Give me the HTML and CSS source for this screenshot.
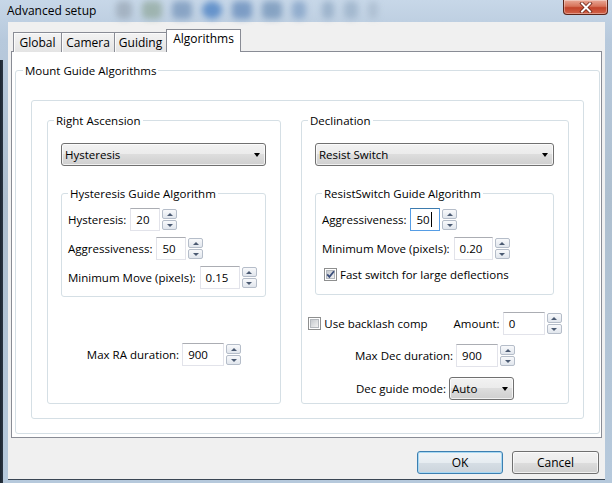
FILE: index.html
```html
<!DOCTYPE html>
<html lang="en">
<head>
  <meta charset="UTF-8" />
  <title>Advanced setup</title>
  <link rel="stylesheet" href="styles.css">
</head>
<body>
<div class="window">
  <div class="titlebar">
    <span class="title">Advanced setup</span>
    <!-- blurred desktop seen through the glass -->
    <div class="glass">
      <i class="g1"></i><i class="g2"></i><i class="g3"></i><i class="g4"></i><i class="g5"></i>
      <i class="g6"></i><i class="g7"></i><i class="g8"></i><i class="g9"></i><i class="g10"></i>
    </div>
    <div class="close">
      <svg width="14" height="11" viewBox="0 0 14 11">
        <path d="M3 1.5 L11 9.5 M11 1.5 L3 9.5" stroke="#6b2416" stroke-width="3.6" stroke-linecap="square"/>
        <path d="M3 1.5 L11 9.5 M11 1.5 L3 9.5" stroke="#fff" stroke-width="2" stroke-linecap="square"/>
      </svg>
    </div>
  </div>

  <div class="dialog">
    <div class="tabs">
      <div class="tab t-global">Global</div>
      <div class="tab t-camera">Camera</div>
      <div class="tab t-guiding">Guiding</div>
      <div class="tab t-algo active">Algorithms</div>
    </div>

    <div class="page">
      <fieldset class="mount">
        <legend>Mount Guide Algorithms</legend>
        <div class="panel">

          <fieldset class="axis ra">
            <legend>Right Ascension</legend>
            <div class="combo"><span>Hysteresis</span><i class="arrow"></i></div>
            <fieldset class="algo hyst">
              <legend>Hysteresis Guide Algorithm</legend>
              <div class="row">
                <span>Hysteresis:</span>
                <div class="spinctrl">
                  <div class="num w30">20</div>
                  <div class="spin"><b class="up"></b><b class="down"></b></div>
                </div>
              </div>
              <div class="row">
                <span>Aggressiveness:</span>
                <div class="spinctrl">
                  <div class="num w30">50</div>
                  <div class="spin"><b class="up"></b><b class="down"></b></div>
                </div>
              </div>
              <div class="row">
                <span>Minimum Move (pixels):</span>
                <div class="spinctrl">
                  <div class="num w40">0.15</div>
                  <div class="spin"><b class="up"></b><b class="down"></b></div>
                </div>
              </div>
            </fieldset>
            <div class="row centered maxra">
              <span>Max RA duration:</span>
              <div class="spinctrl">
                <div class="num w42">900</div>
                <div class="spin"><b class="up"></b><b class="down"></b></div>
              </div>
            </div>
          </fieldset>

          <fieldset class="axis dec">
            <legend>Declination</legend>
            <div class="combo"><span>Resist Switch</span><i class="arrow"></i></div>
            <fieldset class="algo resist">
              <legend>ResistSwitch Guide Algorithm</legend>
              <div class="row">
                <span>Aggressiveness:</span>
                <div class="spinctrl">
                  <div class="num w30 focused">50<i class="caret"></i></div>
                  <div class="spin"><b class="up"></b><b class="down"></b></div>
                </div>
              </div>
              <div class="row">
                <span>Minimum Move (pixels):</span>
                <div class="spinctrl">
                  <div class="num w39">0.20</div>
                  <div class="spin"><b class="up"></b><b class="down"></b></div>
                </div>
              </div>
              <div class="row checkrow">
                <span class="cb">
                  <svg width="13" height="13" viewBox="0 0 13 13">
                    <defs>
                      <linearGradient id="cbOn" x1="0" y1="0" x2="1" y2="1">
                        <stop offset="0" stop-color="#c3c7cc"/>
                        <stop offset="1" stop-color="#f4f4f4"/>
                      </linearGradient>
                    </defs>
                    <rect x="0.5" y="0.5" width="12" height="12" fill="#fff" stroke="#8e8f8f"/>
                    <rect x="2.5" y="2.5" width="8" height="8" fill="url(#cbOn)" stroke="#b4b8bd"/>
                    <path d="M3.2 6.4 L5.4 8.8 L10 3.2" fill="none" stroke="#3c4f7c" stroke-width="1.8"/>
                  </svg>
                  Fast switch for large deflections
                </span>
              </div>
            </fieldset>
            <div class="row centered backlash">
              <span class="cb">
                <svg width="13" height="13" viewBox="0 0 13 13">
                  <defs>
                    <linearGradient id="cbOff" x1="0" y1="0" x2="1" y2="1">
                      <stop offset="0" stop-color="#c3c7cc"/>
                      <stop offset="1" stop-color="#f4f4f4"/>
                    </linearGradient>
                  </defs>
                  <rect x="0.5" y="0.5" width="12" height="12" fill="#fff" stroke="#8e8f8f"/>
                  <rect x="2.5" y="2.5" width="8" height="8" fill="url(#cbOff)" stroke="#b4b8bd"/>
                </svg>
                Use backlash comp
              </span>
              <span class="amount">Amount:</span>
              <div class="spinctrl">
                <div class="num w42">0</div>
                <div class="spin"><b class="up"></b><b class="down"></b></div>
              </div>
            </div>
            <div class="row centered maxdec">
              <span>Max Dec duration:</span>
              <div class="spinctrl">
                <div class="num w42">900</div>
                <div class="spin"><b class="up"></b><b class="down"></b></div>
              </div>
            </div>
            <div class="row centered decmode">
              <span>Dec guide mode:</span>
              <div class="combo small"><span>Auto</span><i class="arrow"></i></div>
            </div>
          </fieldset>

        </div>
      </fieldset>
    </div>

    <div class="buttons">
      <div class="btn default">OK</div>
      <div class="btn">Cancel</div>
    </div>
  </div>
</div>
</body>
</html>
```

FILE: styles.css
```css
* {
  box-sizing: border-box;
}
body {
  margin: 0;
  font-family: "Segoe UI", "Open Sans", sans-serif;
  font-size: 11.5px;
  line-height: 15px;
  color: #000;
}
.window {
  width: 612px;
  height: 483px;
  display: flex;
  flex-direction: column;
  overflow: hidden;
  background:
    linear-gradient(to right, #1c2530 0, #2a3542 3px, transparent 3px) 0 60px / 100% 100% no-repeat,
    linear-gradient(#c7d7e8, #b7c9dc 40px, #aebfcf 200px, #b6c9dc);
}

/* title bar */
.titlebar {
  height: 22px;
  display: flex;
  align-items: flex-start;
  flex: none;
}
.title {
  padding: 3px 0 0 7px;
  font-size: 12px;
  width: 116px;
  flex: none;
}
.glass {
  display: flex;
  gap: 10px;
  padding-top: 1px;
  filter: blur(3px);
  opacity: .7;
}
.glass i {
  width: 20px;
  height: 18px;
  border-radius: 5px;
  background: #7f98b3;
}
.glass .g1 { background: #98a6b4; width: 16px; }
.glass .g2 { background: #8fa79a; }
.glass .g3 { background: #7191b8; }
.glass .g4 { background: #3e78c0; border-radius: 50%; }
.glass .g5 { background: #5f86b8; }
.glass .g6 { background: #6d8fb5; }
.glass .g7 { background: #7d9dc4; width: 14px; }
.glass .g8 { background: #8ea7c2; width: 12px; margin-left: 6px; }
.glass .g9 { background: #97aec6; width: 14px; }
.glass .g10 { background: #a7b9cc; width: 10px; }
.close {
  margin-left: auto;
  margin-right: 4px;
  width: 45px;
  height: 15px;
  border: 1px solid #5b2418;
  border-top: none;
  border-radius: 0 0 4px 4px;
  background: linear-gradient(#e9a996, #d7735a 45%, #c2442a 55%, #d2634a);
  box-shadow: inset 0 0 0 1px rgba(255,255,255,.35);
  display: flex;
  align-items: center;
  justify-content: center;
}

/* dialog body */
.dialog {
  flex: 1;
  margin: 0 7px 3px 8px;
  background: #f0f0f0;
  border-bottom: 1px solid #3a4654;
}
.tabs {
  display: flex;
  align-items: flex-end;
  padding: 7px 0 0 5px;
  font-size: 12px;
}
.tab {
  height: 20px;
  margin-right: -1px;
  border: 1px solid #898c95;
  border-bottom: none;
  background: linear-gradient(#f3f3f3, #e4e4e4);
  box-shadow: inset 1px 1px 0 #fbfbfb;
  text-align: center;
  padding-top: 2px;
}
.t-global { width: 49px; }
.t-camera { width: 54px; }
.t-guiding { width: 53px; }
.t-algo { width: 75px; }
.tab.active {
  height: 23px;
  background: #fff;
  box-shadow: none;
  position: relative;
  z-index: 1;
  padding-top: 1px;
}
.page {
  width: 591px;
  margin: -1px 0 0 3px;
  padding: 11px 1px 3px 3px;
  background: #fff;
  border: 1px solid #898c95;
}

/* static boxes */
fieldset {
  margin: 0;
  padding: 0;
  min-width: 0;
  border: 1px solid #d5dfe5;
  border-radius: 3px;
}
legend {
  margin-left: 6px;
  padding: 0 2px;
  line-height: 15px;
}
.mount {
  width: 585px;
}
.mount > legend {
  margin-left: 7px;
}
.panel {
  display: flex;
  gap: 20px;
  margin: 22px 15px 14px;
  padding: 12px 14px 14px 15px;
  border: 1px solid #d5dfe5;
  border-radius: 3px;
}
.axis {
  flex: none;
  padding-bottom: 3px;
}
.ra { width: 234px; }
.dec { width: 268px; }
.algo {
  margin: 20px 14px 0 13px;
  padding: 7px 6px 7px;
}
.algo legend {
  margin-left: 0;
}
.resist {
  padding-bottom: 11px;
}

/* rows */
.row {
  display: flex;
  align-items: center;
  gap: 4px;
  height: 23px;
  white-space: nowrap;
}
.row + .row {
  margin-top: 6px;
}
.row.checkrow {
  height: 17px;
  padding-left: 2px;
}
.row.centered {
  justify-content: center;
  gap: 3px;
}
.maxra { margin-top: 46px; }
.backlash { margin-top: 17px; }
.dec .row.maxdec { margin-top: 9px; }
.dec .row.decmode { margin-top: 10px; }
.amount {
  margin-left: 23px;
}
.cb {
  display: flex;
  align-items: center;
  gap: 3px;
}
.cb svg {
  flex: none;
}

/* controls */
.spinctrl {
  display: flex;
  align-items: center;
  gap: 2px;
}
.num {
  height: 23px;
  padding: 3px 0 0 5px;
  background: #fff;
  border: 1px solid #e2e3ea;
  border-top-color: #abadb3;
  display: flex;
  align-items: flex-start;
}
.num.focused {
  border-color: #569de5;
  border-top-color: #3d7bad;
}
.caret {
  display: inline-block;
  width: 1px;
  height: 15px;
  margin-left: 1px;
  background: #000;
}
.w30 { width: 30px; }
.w39 { width: 39px; }
.w40 { width: 40px; }
.w42 { width: 42px; }
.spin {
  width: 15px;
  height: 21px;
  display: flex;
  flex-direction: column;
  gap: 1px;
}
.spin b {
  flex: 1;
  border: 1px solid #b5bdc9;
  border-radius: 2px;
  background: linear-gradient(#f8f9fb, #e1e6ed);
  display: flex;
  align-items: center;
  justify-content: center;
}
.spin .up::after,
.spin .down::after {
  content: "";
  border-left: 3px solid transparent;
  border-right: 3px solid transparent;
}
.spin .up::after {
  border-bottom: 3px solid #4b5a72;
}
.spin .down::after {
  border-top: 3px solid #4b5a72;
}
.combo {
  height: 23px;
  margin: 15px 14px 0 13px;
  padding: 0 5px 0 3px;
  display: flex;
  align-items: center;
  border: 1px solid #707070;
  border-radius: 3px;
  background: linear-gradient(#f2f2f2, #ebebeb 50%, #dddddd 50%, #cfcfcf);
  box-shadow: inset 0 0 0 1px rgba(255,255,255,.7);
}
.combo.small {
  width: 65px;
  margin: 0;
  padding-left: 2px;
}
.arrow {
  margin-left: auto;
  border-left: 3.5px solid transparent;
  border-right: 3.5px solid transparent;
  border-top: 4px solid #000;
}

/* dialog buttons */
.buttons {
  display: flex;
  justify-content: flex-end;
  gap: 9px;
  margin-top: 13px;
  padding-right: 6px;
  font-size: 12px;
}
.btn {
  width: 86px;
  height: 23px;
  border: 1px solid #707070;
  border-radius: 3px;
  background: linear-gradient(#f2f2f2, #ebebeb 50%, #dddddd 50%, #cfcfcf);
  box-shadow: inset 0 0 0 1px rgba(255,255,255,.7);
  display: flex;
  align-items: center;
  justify-content: center;
}
.btn + .btn {
  width: 87px;
}
.btn.default {
  border-color: #3c7fb1;
  background: linear-gradient(#f0f4f7, #e6ecf1 50%, #d6dee5 50%, #cbd4dc);
  box-shadow: inset 0 0 0 1px #a7d8f3;
}
```
